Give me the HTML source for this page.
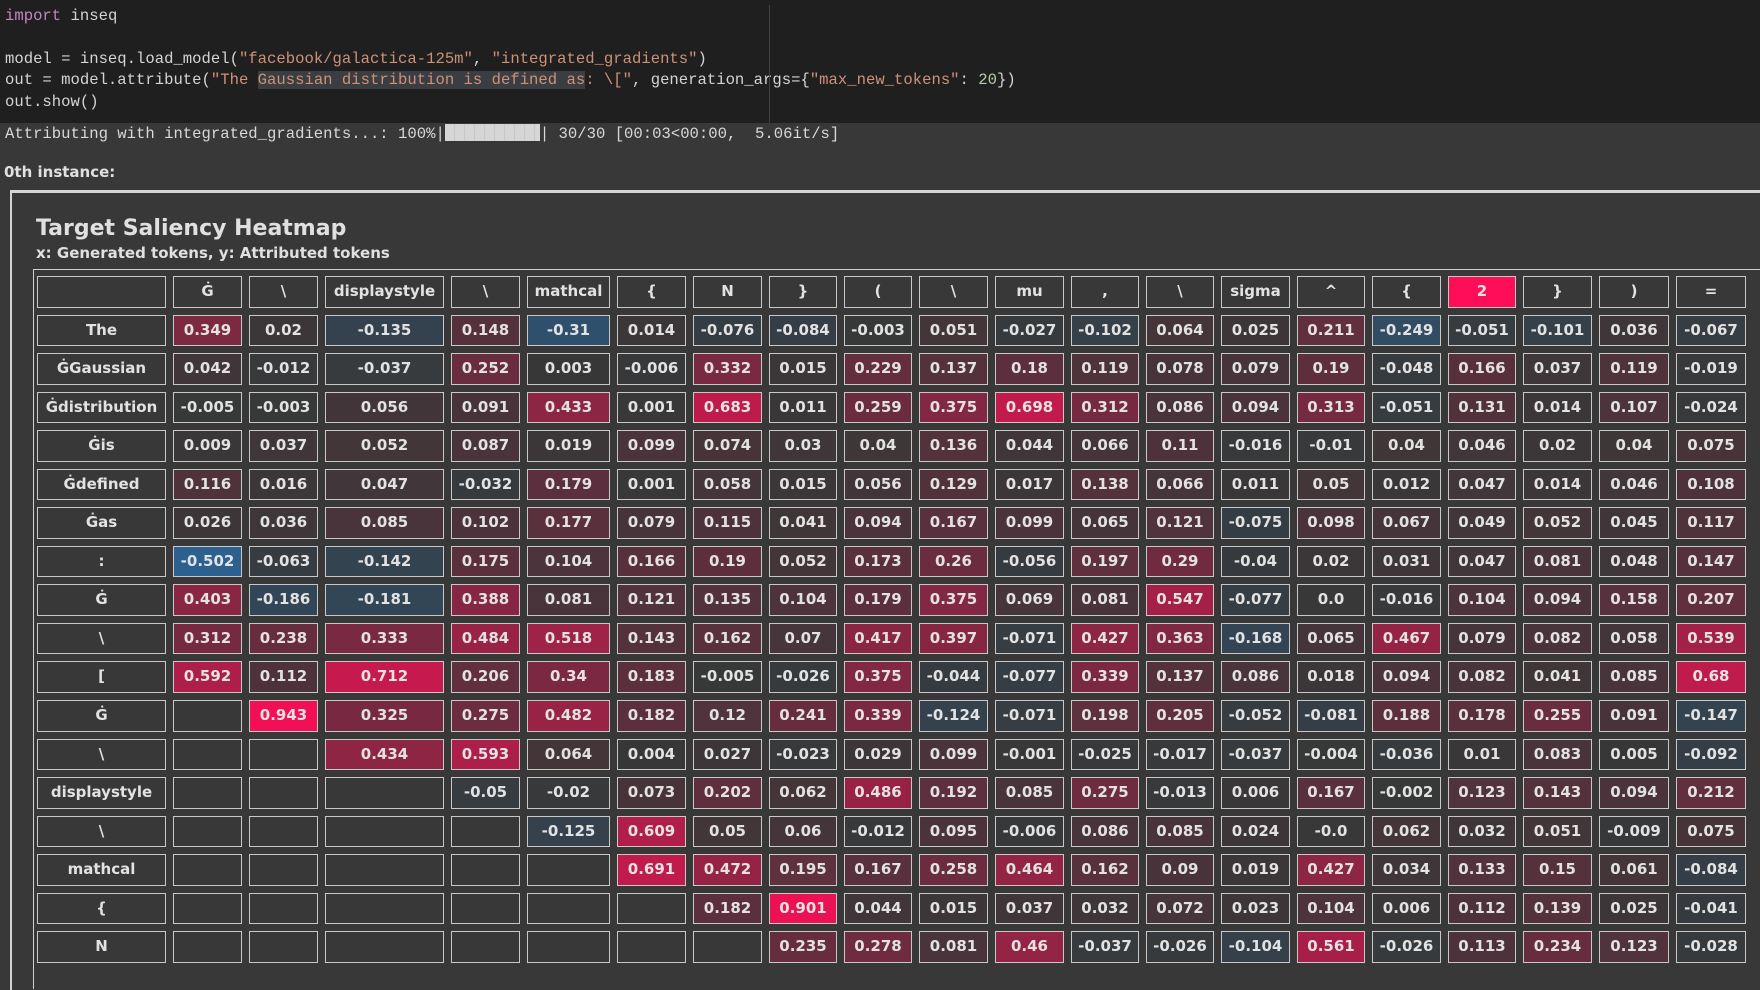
<!DOCTYPE html>
<html><head><meta charset="utf-8"><style>
*{margin:0;padding:0;box-sizing:border-box}
body{width:1760px;height:969px;background:#383838;overflow:hidden;position:relative;font-family:"DejaVu Sans","Liberation Sans",sans-serif}
.code{position:absolute;left:0;top:0;width:1760px;height:123px;background:#1f1f1f}
.code pre{position:absolute;left:5px;top:6px;font-family:"Liberation Mono",monospace;font-size:15.6px;line-height:21.4px;color:#d4d4d4}
.k{color:#c586c0}.s{color:#ce9178}.n{color:#b5cea8}
.hl{background:#3a3d41}
.vl{position:absolute;left:769px;top:5px;width:1px;height:118px;background:#404040}
.out{position:absolute;left:5px;top:124px;font-family:"Liberation Mono",monospace;font-size:15.6px;line-height:21px;color:#d8d8d8;white-space:pre}
.bar{display:inline-block;width:95px;height:17px;background:#d6d6d6;vertical-align:-3px;background-image:repeating-linear-gradient(90deg,#d6d6d6 0 9px,#c8c8c8 9px 10px)}
.inst{position:absolute;left:4px;top:163px;font-weight:bold;font-size:15px;color:#e0e0e0}
.frame{position:absolute;left:10px;top:190px;width:1760px;height:800px;border-left:2px solid #d4d4d4;border-top:3px solid #d4d4d4}
.title{position:absolute;left:36px;top:216px;font-weight:bold;font-size:22px;color:#e0e0e0}
.sub{position:absolute;left:36px;top:244px;font-weight:bold;font-size:15px;color:#e0e0e0}
.tb{position:absolute;left:33px;top:269px;width:1740px;height:720px;border-left:1px solid #cfcfcf;border-top:1px solid #cfcfcf}
.g{position:absolute;left:37px;top:276px;display:grid;grid-template-columns:129px 69px 69px 119px 69px 83px 69px 69px 68px 68px 69px 69px 68px 68px 69px 68px 69px 68px 69px 70px 70px;column-gap:7px;grid-auto-rows:31.5px;row-gap:7.06px}
.g div{border:1px solid #c8c8c8;color:#e2e2e2;font-weight:bold;font-size:15px;text-align:center;line-height:29.5px;white-space:nowrap;overflow:hidden}
</style></head><body>
<div class="code"><pre><span class="k">import</span> inseq

model = inseq.load_model(<span class="s">"facebook/galactica-125m"</span>, <span class="s">"integrated_gradients"</span>)
out = model.attribute(<span class="s">"The <span class="hl">Gaussian distribution is defined as</span>: \["</span>, generation_args={<span class="s">"max_new_tokens"</span>: <span class="n">20</span>})
out.show()</pre><div class="vl"></div></div>
<div class="out">Attributing with integrated_gradients...: 100%|<span class="bar"></span>| 30/30 [00:03&lt;00:00,  5.06it/s]</div>
<div class="inst">0th instance:</div>
<div class="frame"></div>
<div class="title">Target Saliency Heatmap</div>
<div class="sub">x: Generated tokens, y: Attributed tokens</div>
<div class="tb"></div>
<div class="g" id="g">
<div></div><div>Ġ</div><div>\</div><div>displaystyle</div><div>\</div><div>mathcal</div><div>{</div><div>N</div><div>}</div><div>(</div><div>\</div><div>mu</div><div>,</div><div>\</div><div>sigma</div><div>^</div><div>{</div><div>2</div><div>}</div><div>)</div><div>=</div>
<div>The</div><div>0.349</div><div>0.02</div><div>-0.135</div><div>0.148</div><div>-0.31</div><div>0.014</div><div>-0.076</div><div>-0.084</div><div>-0.003</div><div>0.051</div><div>-0.027</div><div>-0.102</div><div>0.064</div><div>0.025</div><div>0.211</div><div>-0.249</div><div>-0.051</div><div>-0.101</div><div>0.036</div><div>-0.067</div>
<div>ĠGaussian</div><div>0.042</div><div>-0.012</div><div>-0.037</div><div>0.252</div><div>0.003</div><div>-0.006</div><div>0.332</div><div>0.015</div><div>0.229</div><div>0.137</div><div>0.18</div><div>0.119</div><div>0.078</div><div>0.079</div><div>0.19</div><div>-0.048</div><div>0.166</div><div>0.037</div><div>0.119</div><div>-0.019</div>
<div>Ġdistribution</div><div>-0.005</div><div>-0.003</div><div>0.056</div><div>0.091</div><div>0.433</div><div>0.001</div><div>0.683</div><div>0.011</div><div>0.259</div><div>0.375</div><div>0.698</div><div>0.312</div><div>0.086</div><div>0.094</div><div>0.313</div><div>-0.051</div><div>0.131</div><div>0.014</div><div>0.107</div><div>-0.024</div>
<div>Ġis</div><div>0.009</div><div>0.037</div><div>0.052</div><div>0.087</div><div>0.019</div><div>0.099</div><div>0.074</div><div>0.03</div><div>0.04</div><div>0.136</div><div>0.044</div><div>0.066</div><div>0.11</div><div>-0.016</div><div>-0.01</div><div>0.04</div><div>0.046</div><div>0.02</div><div>0.04</div><div>0.075</div>
<div>Ġdefined</div><div>0.116</div><div>0.016</div><div>0.047</div><div>-0.032</div><div>0.179</div><div>0.001</div><div>0.058</div><div>0.015</div><div>0.056</div><div>0.129</div><div>0.017</div><div>0.138</div><div>0.066</div><div>0.011</div><div>0.05</div><div>0.012</div><div>0.047</div><div>0.014</div><div>0.046</div><div>0.108</div>
<div>Ġas</div><div>0.026</div><div>0.036</div><div>0.085</div><div>0.102</div><div>0.177</div><div>0.079</div><div>0.115</div><div>0.041</div><div>0.094</div><div>0.167</div><div>0.099</div><div>0.065</div><div>0.121</div><div>-0.075</div><div>0.098</div><div>0.067</div><div>0.049</div><div>0.052</div><div>0.045</div><div>0.117</div>
<div>:</div><div>-0.502</div><div>-0.063</div><div>-0.142</div><div>0.175</div><div>0.104</div><div>0.166</div><div>0.19</div><div>0.052</div><div>0.173</div><div>0.26</div><div>-0.056</div><div>0.197</div><div>0.29</div><div>-0.04</div><div>0.02</div><div>0.031</div><div>0.047</div><div>0.081</div><div>0.048</div><div>0.147</div>
<div>Ġ</div><div>0.403</div><div>-0.186</div><div>-0.181</div><div>0.388</div><div>0.081</div><div>0.121</div><div>0.135</div><div>0.104</div><div>0.179</div><div>0.375</div><div>0.069</div><div>0.081</div><div>0.547</div><div>-0.077</div><div>0.0</div><div>-0.016</div><div>0.104</div><div>0.094</div><div>0.158</div><div>0.207</div>
<div>\</div><div>0.312</div><div>0.238</div><div>0.333</div><div>0.484</div><div>0.518</div><div>0.143</div><div>0.162</div><div>0.07</div><div>0.417</div><div>0.397</div><div>-0.071</div><div>0.427</div><div>0.363</div><div>-0.168</div><div>0.065</div><div>0.467</div><div>0.079</div><div>0.082</div><div>0.058</div><div>0.539</div>
<div>[</div><div>0.592</div><div>0.112</div><div>0.712</div><div>0.206</div><div>0.34</div><div>0.183</div><div>-0.005</div><div>-0.026</div><div>0.375</div><div>-0.044</div><div>-0.077</div><div>0.339</div><div>0.137</div><div>0.086</div><div>0.018</div><div>0.094</div><div>0.082</div><div>0.041</div><div>0.085</div><div>0.68</div>
<div>Ġ</div><div></div><div>0.943</div><div>0.325</div><div>0.275</div><div>0.482</div><div>0.182</div><div>0.12</div><div>0.241</div><div>0.339</div><div>-0.124</div><div>-0.071</div><div>0.198</div><div>0.205</div><div>-0.052</div><div>-0.081</div><div>0.188</div><div>0.178</div><div>0.255</div><div>0.091</div><div>-0.147</div>
<div>\</div><div></div><div></div><div>0.434</div><div>0.593</div><div>0.064</div><div>0.004</div><div>0.027</div><div>-0.023</div><div>0.029</div><div>0.099</div><div>-0.001</div><div>-0.025</div><div>-0.017</div><div>-0.037</div><div>-0.004</div><div>-0.036</div><div>0.01</div><div>0.083</div><div>0.005</div><div>-0.092</div>
<div>displaystyle</div><div></div><div></div><div></div><div>-0.05</div><div>-0.02</div><div>0.073</div><div>0.202</div><div>0.062</div><div>0.486</div><div>0.192</div><div>0.085</div><div>0.275</div><div>-0.013</div><div>0.006</div><div>0.167</div><div>-0.002</div><div>0.123</div><div>0.143</div><div>0.094</div><div>0.212</div>
<div>\</div><div></div><div></div><div></div><div></div><div>-0.125</div><div>0.609</div><div>0.05</div><div>0.06</div><div>-0.012</div><div>0.095</div><div>-0.006</div><div>0.086</div><div>0.085</div><div>0.024</div><div>-0.0</div><div>0.062</div><div>0.032</div><div>0.051</div><div>-0.009</div><div>0.075</div>
<div>mathcal</div><div></div><div></div><div></div><div></div><div></div><div>0.691</div><div>0.472</div><div>0.195</div><div>0.167</div><div>0.258</div><div>0.464</div><div>0.162</div><div>0.09</div><div>0.019</div><div>0.427</div><div>0.034</div><div>0.133</div><div>0.15</div><div>0.061</div><div>-0.084</div>
<div>{</div><div></div><div></div><div></div><div></div><div></div><div></div><div>0.182</div><div>0.901</div><div>0.044</div><div>0.015</div><div>0.037</div><div>0.032</div><div>0.072</div><div>0.023</div><div>0.104</div><div>0.006</div><div>0.112</div><div>0.139</div><div>0.025</div><div>-0.041</div>
<div>N</div><div></div><div></div><div></div><div></div><div></div><div></div><div></div><div>0.235</div><div>0.278</div><div>0.081</div><div>0.46</div><div>-0.037</div><div>-0.026</div><div>-0.104</div><div>0.561</div><div>-0.026</div><div>0.113</div><div>0.234</div><div>0.123</div><div>-0.028</div>
</div>
<script>
document.querySelectorAll('#g div').forEach(function(d){
  var t=d.textContent.trim();
  if(!/^-?\d/.test(t))return;
  var v=parseFloat(t);
  if(v>=0)d.style.background='rgba(255,13,87,'+Math.min(1,v)+')';
  else d.style.background='rgba(30,136,229,'+Math.min(1,-v)+')';
});
</script>
</body></html>
